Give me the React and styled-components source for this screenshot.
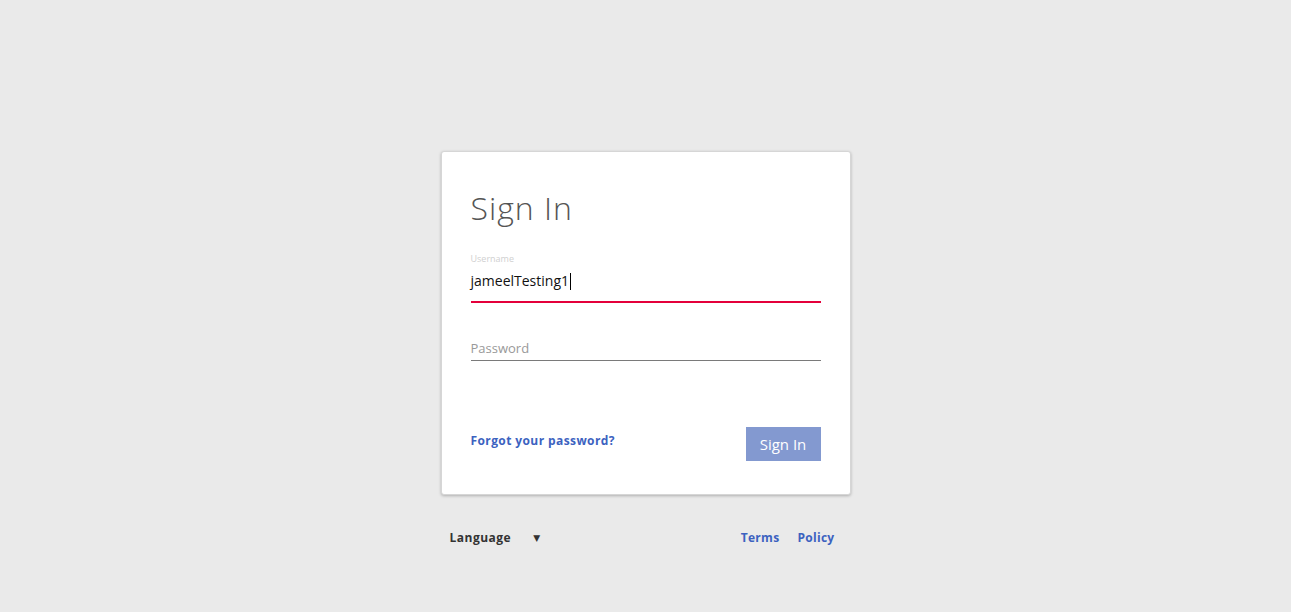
import React from 'react';
import styled, { createGlobalStyle } from 'styled-components';

const GlobalStyle = createGlobalStyle`
  html, body {
    margin: 0;
    padding: 0;
    background: #eaeaea;
    font-family: "Open Sans", "DejaVu Sans", sans-serif;
  }
`;

const Page = styled.div`
  min-height: 612px;
  display: flex;
  flex-direction: column;
  align-items: center;
  padding-top: 151px;
  box-sizing: border-box;
`;

const Card = styled.div`
  width: 410px;
  height: 344px;
  box-sizing: border-box;
  background: #fff;
  border: 1px solid #d6d6d6;
  border-radius: 3px;
  box-shadow: 0 1px 3px rgba(0, 0, 0, 0.25);
  padding: 36px 29px 0 29px;
  display: flex;
  flex-direction: column;
`;

const Title = styled.h1`
  margin: 0;
  font-size: 32px;
  font-weight: 300;
  letter-spacing: 1px;
  color: #555;
  line-height: 40px;
`;

const Field = styled.div`
  display: flex;
  flex-direction: column;
  margin-top: ${(p) => p.$top}px;
  border-bottom: ${(p) => (p.$active ? '2px solid #e4003b' : '1px solid #7a7a7a')};
`;

const Label = styled.span`
  font-size: 9px;
  color: #d0d0d0;
  line-height: 12px;
`;

const Value = styled.div`
  font-size: 14px;
  color: #111;
  line-height: 20px;
  padding: 6px 0 10px;
  display: flex;
  align-items: center;
`;

const Caret = styled.span`
  display: inline-block;
  width: 1px;
  height: 17px;
  background: #000;
  margin-left: 1px;
`;

const Placeholder = styled.div`
  font-size: 13px;
  color: #999;
  line-height: 18px;
  padding-bottom: 3px;
`;

const Actions = styled.div`
  display: flex;
  justify-content: space-between;
  align-items: center;
  margin-top: 66px;
`;

const Forgot = styled.a`
  font-size: 12px;
  font-weight: 700;
  letter-spacing: 0.4px;
  color: #3c62c0;
  text-decoration: none;
  margin-top: -8px;
`;

const Button = styled.button`
  width: 75px;
  height: 34px;
  border: none;
  background: #8399d0;
  color: #fff;
  font-family: inherit;
  font-size: 15px;
  padding: 0;
`;

const Footer = styled.div`
  width: 410px;
  box-sizing: border-box;
  padding: 0 16px 0 9px;
  margin-top: 34px;
  display: flex;
  align-items: center;
  font-size: 12px;
  font-weight: 700;
`;

const Language = styled.div`
  color: #333;
  display: flex;
  align-items: center;
  gap: 22px;
  flex: 1;
  letter-spacing: 0.5px;
`;

const Arrow = styled.span`
  font-size: 9px;
`;

const FooterLink = styled.a`
  color: #3c62c0;
  text-decoration: none;
  margin-left: 18px;
  letter-spacing: 0.3px;
`;

export default function App() {
  return (
    <>
      <GlobalStyle />
      <Page>
        <Card>
          <Title>Sign In</Title>
          <Field $top={25} $active>
            <Label>Username</Label>
            <Value>
              jameelTesting1
              <Caret />
            </Value>
          </Field>
          <Field $top={36}>
            <Placeholder>Password</Placeholder>
          </Field>
          <Actions>
            <Forgot href="#">Forgot your password?</Forgot>
            <Button>Sign In</Button>
          </Actions>
        </Card>
        <Footer>
          <Language>
            Language
            <Arrow>▼</Arrow>
          </Language>
          <FooterLink href="#">Terms</FooterLink>
          <FooterLink href="#">Policy</FooterLink>
        </Footer>
      </Page>
    </>
  );
}
